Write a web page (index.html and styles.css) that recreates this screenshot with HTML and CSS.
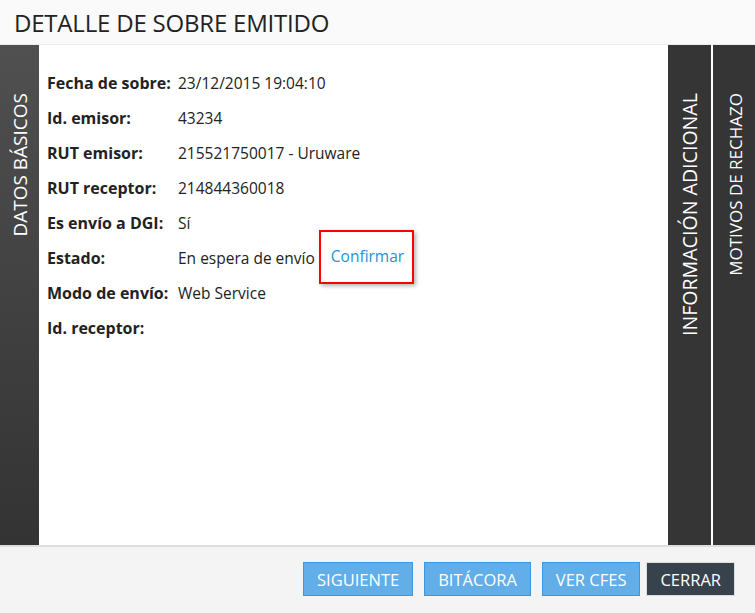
FILE: index.html
```html
<!DOCTYPE html>
<html lang="es">
<head>
  <meta charset="UTF-8">
  <meta name="viewport" content="width=device-width, initial-scale=1">
  <title>Detalle de sobre emitido</title>
  <link rel="stylesheet" href="styles.css">
</head>
<body>

  <header class="top-bar">
    <h1>DETALLE DE SOBRE EMITIDO</h1>
  </header>

  <main class="panel">
    <div class="tab tab-left"><span>DATOS BÁSICOS</span></div>

    <section class="details">
      <div class="row"><span class="label">Fecha de sobre:</span><span class="value">23/12/2015 19:04:10</span></div>
      <div class="row"><span class="label">Id. emisor:</span><span class="value">43234</span></div>
      <div class="row"><span class="label">RUT emisor:</span><span class="value">215521750017 - Uruware</span></div>
      <div class="row"><span class="label">RUT receptor:</span><span class="value">214844360018</span></div>
      <div class="row"><span class="label">Es envío a DGI:</span><span class="value">Sí</span></div>
      <div class="row">
        <span class="label">Estado:</span>
        <span class="value">En espera de envío <a href="#" class="confirm">Confirmar</a></span>
      </div>
      <div class="row"><span class="label">Modo de envío:</span><span class="value">Web Service</span></div>
      <div class="row"><span class="label">Id. receptor:</span><span class="value"></span></div>
    </section>

    <div class="tab tab-info"><span>INFORMACIÓN ADICIONAL</span></div>
    <div class="tab tab-reject"><span>MOTIVOS DE RECHAZO</span></div>
  </main>

  <footer class="actions">
    <button class="btn btn-blue">SIGUIENTE</button>
    <button class="btn btn-blue">BITÁCORA</button>
    <button class="btn btn-blue">VER CFES</button>
    <button class="btn btn-dark">CERRAR</button>
  </footer>

</body>
</html>
```

FILE: styles.css
```css
body {
  font-family: 'Open Sans', 'Noto Sans', sans-serif;
  margin: 0;
  color: #222;
  background: #fff;
  width: 755px;
  height: 613px;
  display: flex;
  flex-direction: column;
  overflow: hidden;
}
.top-bar {
  height: 44px;
  background: #fafafa;
  border-bottom: 1px solid #ececec;
  padding-left: 14px;
  display: flex;
  align-items: center;
}
.top-bar h1 {
  margin: 0;
  font-size: 24px;
  font-weight: 400;
  color: #222;
  letter-spacing: -0.2px;
}
.panel {
  height: 500px;
  display: flex;
  border-bottom: 2px solid #ddd;
}
.tab {
  background: #353535;
  color: #fff;
  display: flex;
  justify-content: center;
  padding-top: 48px;
  box-sizing: border-box;
}
.tab span {
  writing-mode: vertical-rl;
  transform: rotate(180deg);
  font-size: 19px;
  height: fit-content;
}
.tab-left {
  width: 39px;
  background: linear-gradient(to bottom, #505050, #333);
}
.tab-info {
  width: 43px;
}
.tab-info span {
  font-size: 19.6px;
}
.tab-reject {
  width: 42px;
  margin-left: 2px;
  padding-left: 3px;
}
.tab-reject span {
  font-size: 17px;
}
.details {
  flex: 1;
  padding: 20px 8px 0;
  font-size: 15.5px;
}
.row {
  display: flex;
  height: 35px;
  align-items: center;
}
.label {
  width: 131px;
  font-size: 16px;
  font-weight: 700;
  flex-shrink: 0;
}
.value {
  display: flex;
  align-items: center;
}
.confirm {
  color: #2a8fd6;
  text-decoration: none;
  margin: -11px 0 -10px 4px;
  padding: 10px 8px 11px 10px;
  border: 2px solid #f00;
  box-shadow: 2px 2px 4px rgba(0, 0, 0, 0.3);
  line-height: 29px;
}
.actions {
  flex: 1;
  background: #f4f4f4;
  display: flex;
  justify-content: flex-end;
  align-items: flex-start;
  padding: 15px 20px 0 0;
}
.btn {
  font-family: 'Open Sans', 'Noto Sans', sans-serif;
  font-size: 16.5px;
  height: 34px;
  padding: 0 13px;
  color: #fff;
  cursor: pointer;
  margin-left: 11px;
}
.btn-blue {
  background: #62aee8;
  border: 1px solid #3a97e0;
}
.btn-dark {
  background: #38424d;
  border: 1px solid #ddd;
  margin-left: 6px;
}
```
